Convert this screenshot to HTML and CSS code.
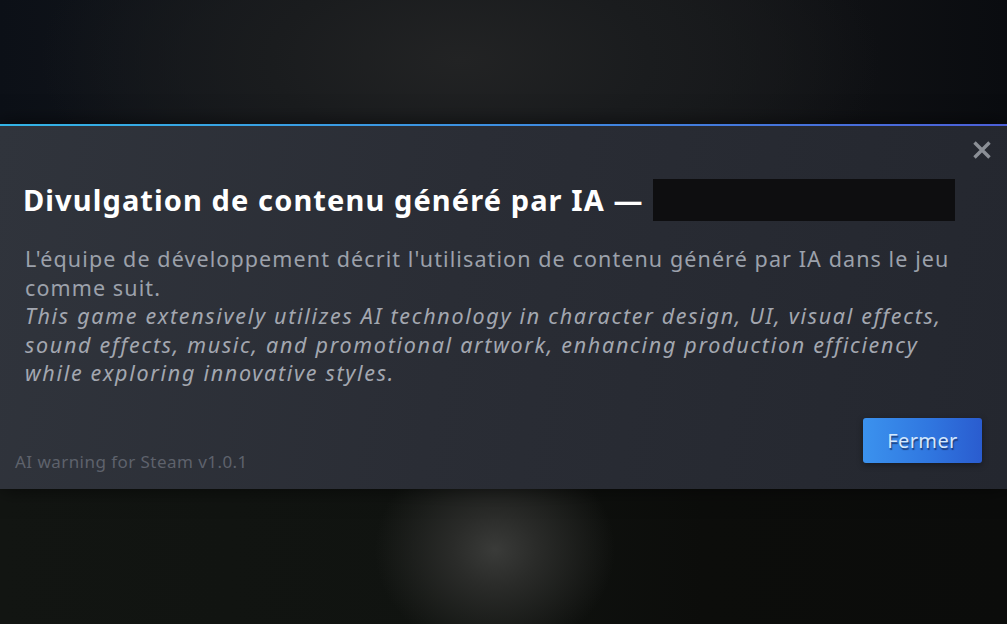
FILE: index.html
```html
<!DOCTYPE html>
<html lang="fr">
<head>
<meta charset="utf-8">
<title>Divulgation de contenu généré par IA</title>
<link rel="stylesheet" href="styles.css">
</head>
<body>
<div class="page">
  <div class="backdrop-top"></div>
  <div class="dialog">
    <div class="topline"></div>
    <button class="close" aria-label="Fermer">
      <svg width="20" height="18" viewBox="0 0 20 18"><path d="M2.5 1.5 L17.5 16.5 M17.5 1.5 L2.5 16.5" stroke="#8b8f96" stroke-width="3.4" fill="none"/></svg>
    </button>
    <div class="content">
      <h1 class="title">Divulgation de contenu généré par IA —<span class="redact"></span></h1>
      <p class="desc">L'équipe de développement décrit l'utilisation de contenu généré par IA dans le jeu<br>comme suit.<br><em>This game extensively utilizes AI technology in character design, UI, visual effects,<br>sound effects, music, and promotional artwork, enhancing production efficiency<br>while exploring innovative styles.</em></p>
    </div>
    <div class="footer">
      <span class="version">AI warning for Steam v1.0.1</span>
      <button class="btn">Fermer</button>
    </div>
  </div>
  <div class="backdrop-bottom"></div>
</div>
</body>
</html>
```
FILE: styles.css
```css
html, body {
  margin: 0;
  padding: 0;
  background: #0b0d0f;
}
.page {
  width: 1007px;
  height: 624px;
  display: flex;
  flex-direction: column;
  overflow: hidden;
  font-family: "Noto Sans", "Open Sans", sans-serif;
}
.backdrop-top {
  height: 124px;
  flex: none;
  background:
    radial-gradient(ellipse 420px 200px at 460px 60px, #222324 0%, #1a1c1e 45%, rgba(14,17,22,0) 100%),
    linear-gradient(90deg, #0c1017 0%, #15181c 35%, #17181a 60%, #0a0c10 100%);
}
.dialog {
  position: relative;
  height: 365px;
  flex: none;
  display: flex;
  flex-direction: column;
  background: linear-gradient(100deg, #30343c 0%, #2a2d35 45%, #24272f 100%);
  box-shadow: 0 0 20px rgba(0,0,0,0.6);
}
.topline {
  height: 2px;
  flex: none;
  background: linear-gradient(90deg, #33b4e6 0%, #3d8ee0 50%, #4c5fd8 100%);
}
.close {
  position: absolute;
  top: 17px;
  right: 15px;
  padding: 0;
  margin: 0;
  border: 0;
  background: none;
  width: 20px;
  height: 18px;
  display: flex;
}
.content {
  padding: 53px 25px 0 23px;
}
.title {
  margin: 0;
  font-size: 29px;
  font-weight: 700;
  line-height: 42px;
  letter-spacing: 1.1px;
  color: #ffffff;
  white-space: nowrap;
  display: flex;
  align-items: center;
}
.redact {
  display: inline-block;
  flex: none;
  width: 302px;
  height: 42px;
  background: #0e0e10;
  margin-left: 9px;
}
.desc {
  margin: 24px 0 0 2px;
  font-size: 21.5px;
  line-height: 28.6px;
  letter-spacing: 1.1px;
  color: #9ca1ab;
  white-space: nowrap;
}
.desc em {
  font-style: italic;
  letter-spacing: 1.7px;
  color: #a3a7b0;
}
.footer {
  margin-top: auto;
  display: flex;
  justify-content: space-between;
  align-items: flex-end;
  padding: 0 25px 16px 15px;
}
.version {
  font-size: 17px;
  line-height: 23px;
  letter-spacing: 0.45px;
  color: #5e626c;
}
.btn {
  width: 119px;
  height: 45px;
  margin-bottom: 10px;
  border: 0;
  border-radius: 3px;
  background: linear-gradient(90deg, #3b92ee 0%, #3077e0 55%, #2a5ccf 100%);
  box-shadow: 0 2px 6px rgba(0,0,0,0.35);
  font-family: "Noto Sans", "Open Sans", sans-serif;
  font-size: 20px;
  letter-spacing: 0.4px;
  color: #d6e8fb;
  text-shadow: 1px 2px 1px rgba(20,40,90,0.7);
  padding: 0;
}
.backdrop-bottom {
  flex: 1;
  background:
    radial-gradient(ellipse 120px 105px at 495px 550px, #3a3b39 0%, #2a2b29 35%, rgba(17,19,17,0) 100%),
    linear-gradient(90deg, #121512 0%, #101310 45%, #0c0d0b 70%, #0b0c0b 100%);
  background-position: 0 -489px, 0 0;
  background-size: 1007px 624px, 100% 100%;
  background-repeat: no-repeat;
}
```
